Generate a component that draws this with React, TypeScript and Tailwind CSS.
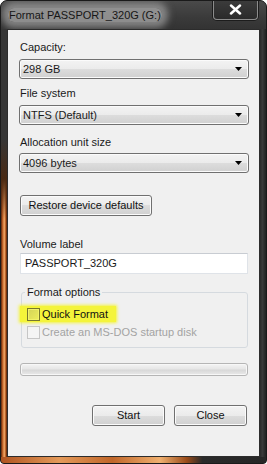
// Windows 7 "Format" dialog, aero glass frame over a warm desktop.
import React from 'react'

const btnFace =
  'bg-[linear-gradient(180deg,#f3f3f3_0%,#ebebeb_50%,#dddddd_50%,#d0d0d0_100%)] border border-[#707070] rounded-[3px] shadow-[inset_0_0_0_1px_#fbfbfb]'

function Combo({ value }: { value: string }) {
  return (
    <div className={`-mx-[1px] h-[20px] flex items-center pl-[3px] pr-[6px] ${btnFace}`}>
      <span className="flex-1 truncate">{value}</span>
      <svg width="7" height="4" viewBox="0 0 7 4">
        <path d="M0 0h7L3.5 4z" fill="#000" />
      </svg>
    </div>
  )
}

function Label({ children, className = '' }: { children: React.ReactNode; className?: string }) {
  return <div className={`h-[15px] leading-[15px] ${className}`}>{children}</div>
}

function Button({ children, className = '' }: { children: React.ReactNode; className?: string }) {
  return (
    <button type="button" className={`h-[21px] flex items-center justify-center text-[#111] ${btnFace} ${className}`}>
      {children}
    </button>
  )
}

export default function App() {
  return (
    <div className="w-[267px] h-[464px] flex flex-col overflow-hidden rounded-t-[7px] rounded-b-[4px] border border-[#1a1a1a] bg-[#2e2e2e] font-['Liberation_Sans',Arial,sans-serif] text-[11px] text-[#1a1a1a]">
      {/* Title bar */}
      <div className="h-[28px] flex items-start bg-[linear-gradient(180deg,#4a4a4a_0%,#3a3a3a_60%,#333333_100%)]">
        <div className="h-full flex items-center pl-[7px]">
          <span className="px-[1px] rounded-[6px] bg-[#b4b4b4b0] shadow-[0_0_7px_6px_#b4b4b49a] text-[#161616] leading-[14px]">
            Format PASSPORT_320G (G:)
          </span>
        </div>
        <div className="ml-auto mr-[8px] -mt-[1px] w-[45px] h-[20px] flex items-center justify-center rounded-b-[4px] border border-[#8c8c8c] border-t-0 shadow-[0_0_0_1px_#1c1c1c] bg-[linear-gradient(180deg,#3c3c3c,#2a2a2a)]">
          <svg width="13" height="11" viewBox="0 0 13 11">
            <path d="M2 1.5l9 8M11 1.5l-9 8" stroke="#3a3a3a" strokeWidth="4" strokeLinecap="round" />
            <path d="M2 1.5l9 8M11 1.5l-9 8" stroke="#ffffff" strokeWidth="2.4" strokeLinecap="round" />
          </svg>
        </div>
      </div>

      {/* Body row: frame | client | frame */}
      <div className="flex-1 flex">
        <div className="w-[6px] bg-[linear-gradient(180deg,#353535_0px,#353535_110px,#4a2a14_150px,transparent_190px),linear-gradient(90deg,#5a2408_0%,#c8682a_30%,#f0a868_55%,#b0561c_80%,#4a1c06_100%)]" />

        <div className="w-[253px] flex flex-col border border-[#2c2c2c] bg-[#f0f0f0] pl-[12px] pr-[11px] pt-[10px]">
          <Label>Capacity:</Label>
          <div className="mt-[4px]">
            <Combo value="298 GB" />
          </div>

          <Label className="mt-[7px]">File system</Label>
          <div className="mt-[4px]">
            <Combo value="NTFS (Default)" />
          </div>

          <Label className="mt-[10px]">Allocation unit size</Label>
          <div className="mt-[3px]">
            <Combo value="4096 bytes" />
          </div>

          <div className="mt-[22px] flex">
            <Button className="w-[132px]">Restore device defaults</Button>
          </div>

          <Label className="mt-[21px]">Volume label</Label>
          <div className="mt-[1px] h-[21px] flex items-center pl-[4px] bg-white border border-[#dfe3e8] border-t-[#c8ccd2]">
            PASSPORT_320G
          </div>

          <fieldset className="mt-[11px] ml-[1px] border border-[#d5dadf] rounded-[3px]">
            <legend className="ml-[3px] px-[2px] h-[15px] leading-[15px]">Format options</legend>
            <div className="flex flex-col pl-[5px] pt-[6px] pb-[7px]">
              <div className="-ml-[7px] pl-[7px] pr-[8px] w-fit h-[16px] flex items-center gap-[2px] bg-[#f4f43a] shadow-[0_0_3px_1px_#f4f43a]">
                <span className="w-[13px] h-[13px] border border-[#77772e] bg-[linear-gradient(135deg,#d4d458,#eeee5c)] shadow-[inset_0_0_0_1px_#f2f26a]" />
                <span className="text-[#111]">Quick Format</span>
              </div>
              <div className="mt-[2px] h-[16px] flex items-center gap-[2px] text-[#a3a3a3]">
                <span className="w-[13px] h-[13px] border border-[#c6c6c6] bg-[#f4f4f4]" />
                <span>Create an MS-DOS startup disk</span>
              </div>
            </div>
          </fieldset>

          <div className="mt-[15px] h-[13px] rounded-[3px] border border-[#b5b5b5] bg-[linear-gradient(180deg,#f4f4f4_0%,#e6e6e6_45%,#d8d8d8_55%,#e9e9e9_100%)] shadow-[inset_0_0_0_1px_#f7f7f7]" />

          <div className="mt-[29px] flex justify-end gap-[9px] mr-[1px]">
            <Button className="w-[73px]">Start</Button>
            <Button className="w-[73px]">Close</Button>
          </div>
        </div>

        <div className="w-[6px] bg-[linear-gradient(90deg,#2a2a2a,#3a3a3a_40%,#222222)]" />
      </div>

      {/* Bottom frame */}
      <div className="h-[6px] bg-[linear-gradient(90deg,#b05420_0%,#e49a5a_22%,#c0662a_42%,#f0b070_60%,#9a4c1a_70%,#2a2a2a_76%,#262626_100%)]" />
    </div>
  )
}
